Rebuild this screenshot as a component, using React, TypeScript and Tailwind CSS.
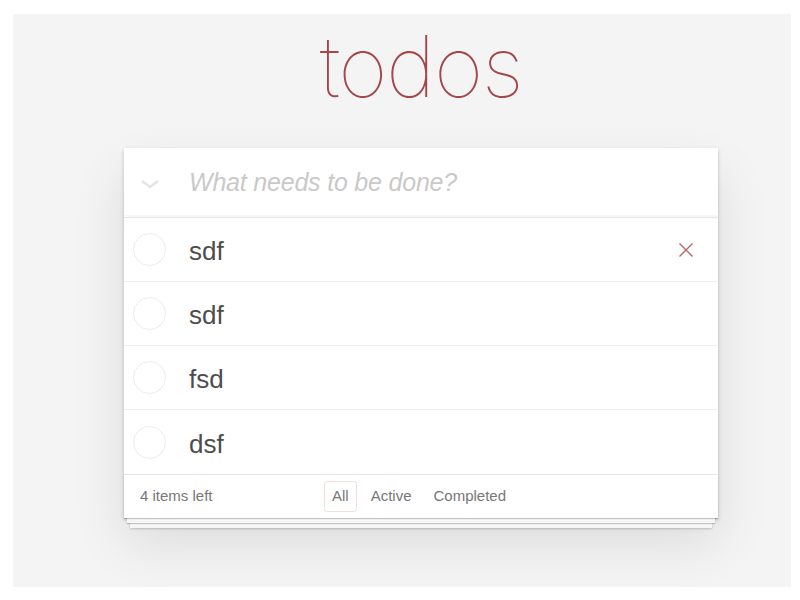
import React from "react";

const items = ["sdf", "sdf", "fsd", "dsf"];

function Circle() {
  return <div className="h-[33px] w-[33px] shrink-0 rounded-full border border-[#ececec]" />;
}

export default function App() {
  return (
    <div className="h-[600px] w-[800px] bg-white pl-[13px] pt-[14px]" style={{ fontFamily: "'Liberation Sans', Arial, sans-serif" }}>
      <div className="h-[573px] w-[778px] bg-[#f4f4f4] pl-[111px] pt-[16px]">
        <div className="w-[594px]">
          <h1 className="h-[118px] text-center font-['Inter',sans-serif] text-[85px] font-thin leading-[74px] tracking-[-1.5px] text-[#a3474b]">todos</h1>
          <div className="bg-white shadow-[0_2px_4px_rgba(0,0,0,0.2),0_25px_50px_rgba(0,0,0,0.1)]">
            <div className="flex h-[69px] items-center shadow-[inset_0_-2px_1px_rgba(0,0,0,0.03)]">
              <div className="flex w-[65px] justify-center pr-[13px] pt-[2px]">
                <svg width="20" height="10" viewBox="0 0 20 10">
                  <path d="M2 2 L10 8 L18 2" fill="none" stroke="#e3e3e3" strokeWidth="2.2" />
                </svg>
              </div>
              <span className="text-[25px] font-light italic tracking-[-0.2px] text-[#c9c9c9]">What needs to be done?</span>
            </div>
            <div className="border-t border-[#e6e6e6]">
              {items.map((t, i) => (
                <div key={i} className={`flex h-[64px] items-center ${i < items.length - 1 ? "border-b border-[#ededed]" : ""}`}>
                  <div className="pl-[9px] pr-[23px]">
                    <Circle />
                  </div>
                  <span className="flex-1 pt-[4px] text-[26px] text-[#4d4d4d]">{t}</span>
                  {i === 0 && (
                    <svg className="mr-[24px]" width="16" height="16" viewBox="0 0 16 16">
                      <path d="M1.5 1.5 L14.5 14.5 M14.5 1.5 L1.5 14.5" stroke="#b3656a" strokeWidth="1.4" />
                    </svg>
                  )}
                </div>
              ))}
            </div>
            <div className="grid h-[44px] grid-cols-[1fr_auto_1fr] items-center border-t border-[#e6e6e6] px-[16px] text-[15px] text-[#777] shadow-[0_1px_1px_rgba(0,0,0,0.2),0_8px_0_-3px_#f6f6f6,0_9px_1px_-3px_rgba(0,0,0,0.2),0_16px_0_-6px_#f6f6f6,0_17px_2px_-6px_rgba(0,0,0,0.2)]">
              <span>4 items left</span>
              <div className="-ml-[4px] flex items-center">
                <span className="m-[3px] rounded-[3px] border border-[rgba(175,47,47,0.15)] px-[7px] py-[3px]">All</span>
                <span className="m-[3px] rounded-[3px] border border-transparent px-[7px] py-[3px]">Active</span>
                <span className="m-[3px] rounded-[3px] border border-transparent px-[7px] py-[3px]">Completed</span>
              </div>
              <span />
            </div>
          </div>
        </div>
      </div>
    </div>
  );
}
